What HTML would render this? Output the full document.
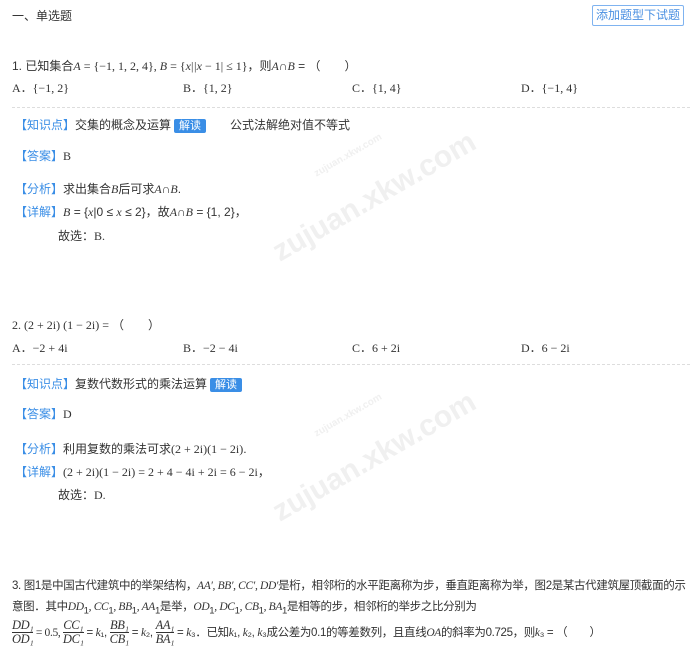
<!DOCTYPE html>
<html><head><meta charset="utf-8"><style>
body{margin:0;width:700px;height:654px;background:#fff;font-family:"Liberation Sans","Noto Sans CJK SC",sans-serif;font-size:12px;color:#333;position:relative;overflow:hidden}
.a{position:absolute;white-space:nowrap;line-height:16px}
.m{font-family:"Liberation Serif","Noto Serif CJK SC",serif;font-style:italic}
.r{font-family:"Liberation Serif",serif}
.k{color:#3a8ee6}
.btn{position:absolute;left:592px;top:5px;width:90px;height:19px;border:1px solid #7fb3f0;border-radius:2px;color:#4a90e2;font-size:12px;text-align:center;line-height:19px}
.tag{display:inline-block;background:#3a8ee6;color:#fff;border-radius:2px;padding:0 5px;font-size:11px;line-height:14px;margin-left:3px}
.dash{position:absolute;left:12px;width:678px;border-top:1px dashed #ddd}
.wm{position:absolute;color:#f0f0f0;font-weight:bold;transform:rotate(-30deg);font-family:"Liberation Sans",sans-serif}
.fr{display:inline-block;vertical-align:middle;text-align:center;font-family:"Liberation Serif",serif;font-style:italic;line-height:13px;font-size:12.5px}
.fr span{display:block;border-top:1px solid #333}
.q3{font-size:11.5px;letter-spacing:-0.35px}
</style></head><body>
<div class="wm" style="left:260px;top:180px;font-size:30px">zujuan.xkw.com</div>
<div class="wm" style="left:310px;top:150px;font-size:10px">zujuan.xkw.com</div>
<div class="wm" style="left:260px;top:440px;font-size:30px">zujuan.xkw.com</div>
<div class="wm" style="left:310px;top:410px;font-size:10px">zujuan.xkw.com</div>
<div class="a" style="left:12px;top:8px">一、单选题</div>
<div class="btn">添加题型下试题</div>

<div class="a" style="left:12px;top:58px">1. 已知集合<span class="m">A</span><span class="r"> = {−1, 1, 2, 4}, </span><span class="m">B</span><span class="r"> = {</span><span class="m">x</span><span class="r">|</span><span class="m">|x</span><span class="r"> − 1| ≤ 1}</span>，则<span class="m">A</span>∩<span class="m">B</span> = （　　）</div>
<div class="a r" style="left:12px;top:80px">A．{−1, 2}</div>
<div class="a r" style="left:183px;top:80px">B．{1, 2}</div>
<div class="a r" style="left:352px;top:80px">C．{1, 4}</div>
<div class="a r" style="left:521px;top:80px">D．{−1, 4}</div>
<div class="dash" style="top:107px"></div>
<div class="a" style="left:15px;top:117px"><span class="k">【知识点】</span>交集的概念及运算<span class="tag">解读</span>　　公式法解绝对值不等式</div>
<div class="a" style="left:15px;top:148px"><span class="k">【答案】</span><span class="r">B</span></div>
<div class="a" style="left:15px;top:181px"><span class="k">【分析】</span>求出集合<span class="m">B</span>后可求<span class="m">A</span>∩<span class="m">B</span>.</div>
<div class="a" style="left:15px;top:204px"><span class="k">【详解】</span><span class="m">B</span> = {<span class="m">x</span>|0 ≤ <span class="m">x</span> ≤ 2}，故<span class="m">A</span>∩<span class="m">B</span> = {1, 2}，</div>
<div class="a" style="left:58px;top:228px">故选：<span class="r">B.</span></div>

<div class="a" style="left:12px;top:317px"><span class="r">2. (2 + 2i) (1 − 2i) = </span>（　　）</div>
<div class="a r" style="left:12px;top:340px">A．−2 + 4i</div>
<div class="a r" style="left:183px;top:340px">B．−2 − 4i</div>
<div class="a r" style="left:352px;top:340px">C．6 + 2i</div>
<div class="a r" style="left:521px;top:340px">D．6 − 2i</div>
<div class="dash" style="top:364px"></div>
<div class="a" style="left:15px;top:376px"><span class="k">【知识点】</span>复数代数形式的乘法运算<span class="tag">解读</span></div>
<div class="a" style="left:15px;top:406px"><span class="k">【答案】</span><span class="r">D</span></div>
<div class="a" style="left:15px;top:441px"><span class="k">【分析】</span>利用复数的乘法可求<span class="r">(2 + 2i)(1 − 2i)</span>.</div>
<div class="a" style="left:15px;top:464px"><span class="k">【详解】</span><span class="r">(2 + 2i)(1 − 2i) = 2 + 4 − 4i + 2i = 6 − 2i</span>，</div>
<div class="a" style="left:58px;top:487px">故选：<span class="r">D.</span></div>

<div class="a q3" style="left:12px;top:578px">3. 图1是中国古代建筑中的举架结构，<span class="m">AA′, BB′, CC′, DD′</span>是桁，相邻桁的水平距离称为步，垂直距离称为举，图2是某古代建筑屋顶截面的示</div>
<div class="a q3" style="left:12px;top:599px">意图．其中<span class="m">DD</span><sub>1</sub><span class="m">, CC</span><sub>1</sub><span class="m">, BB</span><sub>1</sub><span class="m">, AA</span><sub>1</sub>是举，<span class="m">OD</span><sub>1</sub><span class="m">, DC</span><sub>1</sub><span class="m">, CB</span><sub>1</sub><span class="m">, BA</span><sub>1</sub>是相等的步，相邻桁的举步之比分别为</div>
<div class="a q3" style="left:12px;top:619px;line-height:28px"><span class="fr">DD₁<span>OD₁</span></span><span class="r"> = 0.5, </span><span class="fr">CC₁<span>DC₁</span></span> = <span class="m">k</span>₁, <span class="fr">BB₁<span>CB₁</span></span> = <span class="m">k</span>₂, <span class="fr">AA₁<span>BA₁</span></span> = <span class="m">k</span>₃．已知<span class="m">k</span>₁, <span class="m">k</span>₂, <span class="m">k</span>₃成公差为0.1的等差数列，且直线<span class="m">OA</span>的斜率为0.725，则<span class="m">k</span>₃ = （　　）</div>
</body></html>
